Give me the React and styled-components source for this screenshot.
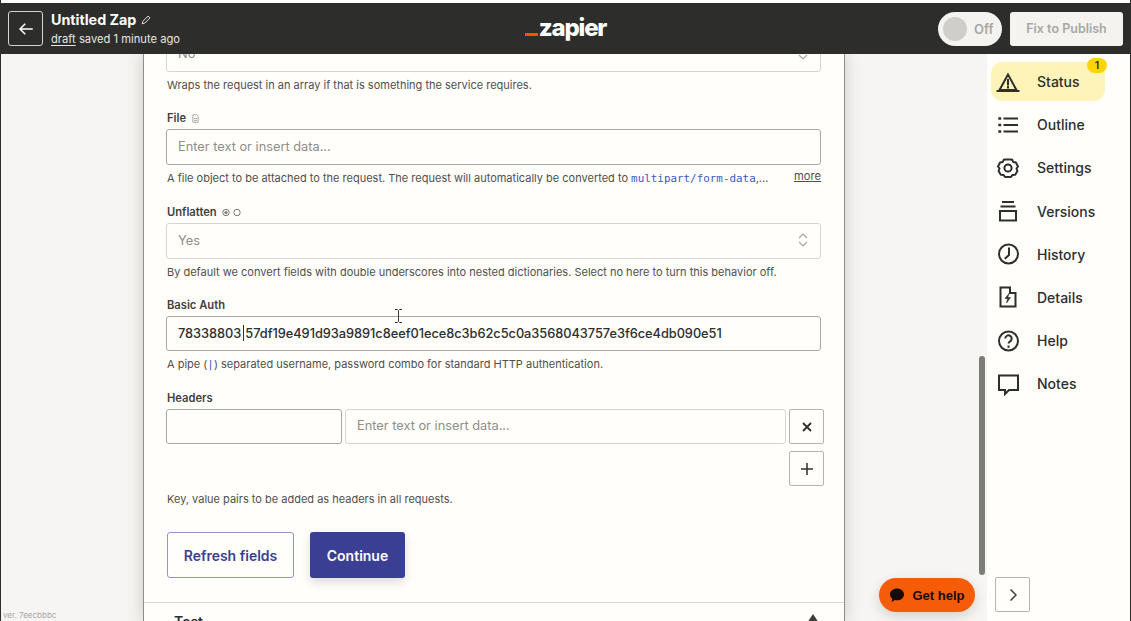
import React from 'react';
import styled, { createGlobalStyle } from 'styled-components';

const GlobalStyle = createGlobalStyle`
    html, body {
        margin: 0;
        height: 100%;
        overflow: hidden;
        background: #fffefb;
        font-family: Inter, "Liberation Sans", sans-serif;
        color: #2d2e2e;
    }
    * {
        box-sizing: border-box;
    }
`;

const Page = styled.div`
    width: 1131px;
    height: 621px;
    padding-top: 3px;
    background: #fffefb;
    display: flex;
    flex-direction: column;
    border-left: 1px solid #2d2d2b;
    border-right: 1px solid #2d2d2b;
    position: relative;
    overflow: hidden;
`;

const Header = styled.header`
    height: 51px;
    flex: none;
    margin: 0 -1px;
    background: #2d2d2b;
    display: grid;
    grid-template-columns: 1fr auto 1fr;
    align-items: center;
    padding: 0 8px;
`;

const HeaderLeft = styled.div`
    display: flex;
    align-items: center;
    gap: 8px;
`;

const BackButton = styled.button`
    width: 35px;
    height: 35px;
    background: transparent;
    border: 1px solid #d6d5d0;
    border-radius: 3px;
    color: #fff;
    padding: 0;
    display: flex;
    align-items: center;
    justify-content: center;
`;

const ZapInfo = styled.div`
    display: flex;
    flex-direction: column;
    gap: 3px;
`;

const ZapTitle = styled.div`
    display: flex;
    align-items: center;
    gap: 5px;
    font-size: 14.3px;
    line-height: 18px;
    font-weight: 700;
    color: #fffefb;
`;

const SavedLine = styled.div`
    font-size: 11.2px;
    line-height: 14px;
    color: #e6e5e0;

    u {
        text-underline-offset: 2px;
    }
`;

const Logo = styled.div`
    display: flex;
    align-items: flex-end;
    gap: 1px;
    margin-top: -1px;
`;

const LogoBar = styled.span`
    width: 13px;
    height: 3px;
    background: #ff4f00;
    margin-bottom: 6px;
`;

const LogoText = styled.span`
    font-size: 24px;
    line-height: 28px;
    font-weight: 800;
    letter-spacing: -1.2px;
    color: #fffefb;
`;

const HeaderRight = styled.div`
    display: flex;
    align-items: center;
    justify-content: flex-end;
    gap: 8px;
`;

const Toggle = styled.div`
    width: 64px;
    height: 34px;
    border-radius: 17px;
    background: #f4f3f0;
    display: flex;
    align-items: center;
    padding: 0 5px;
    gap: 7px;
    font-size: 13px;
    font-weight: 600;
    color: #a8a7a3;
`;

const ToggleKnob = styled.span`
    width: 24px;
    height: 24px;
    border-radius: 50%;
    background: #cfcecb;
`;

const PublishButton = styled.button`
    width: 113px;
    height: 34px;
    background: #f4f3f0;
    border: 0;
    border-radius: 3px;
    font: 600 12.5px Inter, sans-serif;
    color: #a8a7a3;
`;

const Body = styled.div`
    flex: 1;
    min-height: 0;
    display: flex;
    position: relative;
`;

const Canvas = styled.main`
    width: 986px;
    background: #f6f5f3;
    overflow: hidden;
    padding-left: 142px;
    position: relative;
`;

const Panel = styled.section`
    width: 702px;
    height: 100%;
    background: #fffefb;
    border-left: 1px solid #8e8d88;
    border-right: 1px solid #8e8d88;
    box-shadow: 0 0 16px rgba(60, 55, 40, 0.22);
    position: relative;
    overflow: hidden;
`;

const Form = styled.div`
    padding: 0 23px 0 22px;
    display: flex;
    flex-direction: column;
`;

const Field = styled.div`
    margin-top: ${p => p.$gap || 0}px;
`;

const Label = styled.div`
    display: flex;
    align-items: center;
    gap: 5px;
    height: 16px;
    margin-bottom: 3px;
    padding-left: 1px;
    font-size: 11.2px;
    font-weight: 600;
    color: #403f3e;
`;

const InputBox = styled.div`
    height: ${p => p.$height || 36}px;
    flex: ${p => p.$flex || 'none'};
    background: #fffefb;
    border: 1px solid ${p => (p.$muted ? '#d6d5d0' : '#aaa89f')};
    border-radius: 3px;
    display: flex;
    align-items: center;
    justify-content: space-between;
    padding: 0 11px 2px;
    font-size: 12.8px;
    font-weight: ${p => (p.$value ? 500 : 400)};
    color: ${p => (p.$value ? '#2d2e2e' : '#8f8e8a')};
`;

const ClippedSelect = styled(InputBox)`
    margin-top: -18px;
`;

const Caret = styled.span`
    display: inline-block;
    width: 1px;
    height: 16px;
    margin: 0 1px 0 2px;
    background: #2d2e2e;
    vertical-align: -3px;
`;

const AuthValue = styled.span`
    letter-spacing: -0.04px;
`;

const Help = styled.div`
    margin-top: 6px;
    display: flex;
    justify-content: space-between;
    font-size: 11px;
    line-height: 14px;
    padding-left: 1px;
    color: #504f4c;
`;

const Code = styled.code`
    font-family: "DejaVu Sans Mono", monospace;
    font-size: 10.9px;
    color: #3d57c8;
`;

const More = styled.u`
    font-size: 11.2px;
    margin-top: -2px;
`;

const HeaderRow = styled.div`
    display: flex;
    gap: 3px;
    margin-right: -3px;
`;

const SquareButton = styled.button`
    width: 35px;
    height: 35px;
    flex: none;
    background: #fffefb;
    border: 1px solid #b5b4ad;
    border-radius: 2px;
    color: #2d2e2e;
    padding: 0;
    display: flex;
    align-items: center;
    justify-content: center;
`;

const AddButton = styled(SquareButton)`
    align-self: flex-end;
    margin: 7px -3px 0 0;
`;

const Actions = styled.div`
    display: flex;
    gap: 16px;
    margin-top: 26px;
    padding-left: 1px;
`;

const OutlineButton = styled.button`
    width: 127px;
    height: 46px;
    background: #fffefb;
    border: 1px solid #8f95cf;
    border-radius: 3px;
    font: 600 14px Inter, sans-serif;
    color: #3b3f94;
`;

const PrimaryButton = styled.button`
    width: 95px;
    height: 46px;
    background: #3b3f94;
    border: 0;
    border-radius: 3px;
    font: 600 14px Inter, sans-serif;
    color: #fffefb;
    box-shadow: 0 4px 10px rgba(40, 40, 40, 0.16);
`;

const NextStep = styled.div`
    margin-top: 24px;
    border-top: 1px solid #d6d5d0;
    padding: 10px 25px 0 30px;
    display: flex;
    justify-content: space-between;
    font-size: 14px;
    font-weight: 600;
`;

const CollapseArrow = styled.span`
    width: 0;
    height: 0;
    border-left: 6px solid transparent;
    border-right: 6px solid transparent;
    border-bottom: 9px solid #3d3d3b;
    margin: 1px 0 0 0;
`;

const Scrollbar = styled.div`
    position: absolute;
    top: 302px;
    left: 978px;
    width: 6px;
    height: 219px;
    border-radius: 3px;
    background: #7c7c78;
`;

const Version = styled.span`
    position: absolute;
    left: 2px;
    bottom: 1px;
    font-size: 8px;
    color: #a8a7a3;
`;

const TextCursor = styled.svg`
    position: absolute;
    left: 393px;
    top: 255px;
`;

const HelpButton = styled.button`
    position: absolute;
    left: 878px;
    top: 524px;
    width: 96px;
    height: 34px;
    border: 0;
    border-radius: 17px;
    background: #f55c0a;
    display: flex;
    align-items: center;
    justify-content: center;
    gap: 7px;
    font: 700 13px "Liberation Sans", sans-serif;
    color: #140c05;
    box-shadow: 0 4px 12px rgba(60, 50, 30, 0.18);
`;

const Sidebar = styled.aside`
    flex: 1;
    padding: 8px 4px 9px;
    display: flex;
    flex-direction: column;
    gap: 4.2px;
    background: #fffefb;
`;

const NavItem = styled.div`
    position: relative;
    width: 114px;
    height: 39px;
    flex: none;
    display: flex;
    align-items: center;
    gap: 17px;
    padding-left: 5px;
    border-radius: 12px;
    background: ${p => (p.$active ? '#fff4b8' : 'transparent')};
    font-size: 14px;
    font-weight: 500;
    color: #2d2e2e;
`;

const Badge = styled.span`
    position: absolute;
    right: -2px;
    top: -4px;
    width: 20px;
    height: 15px;
    border-radius: 8px;
    background: #ffd400;
    font-size: 10.5px;
    font-weight: 600;
    display: flex;
    align-items: center;
    justify-content: center;
`;

const ExpandButton = styled(SquareButton)`
    margin: auto 0 0 4px;
    color: #403f3e;
`;

const Icon = ({ children, size = 24, sw = 2 }) => (
    <svg width={size} height={size} viewBox="0 0 24 24" fill="none" stroke="currentColor" strokeWidth={sw} strokeLinecap="square">
        {children}
    </svg>
);

const UpDown = () => (
    <svg width="12" height="16" viewBox="0 0 12 16" fill="none" stroke="#aaa89f" strokeWidth="1.2">
        <path d="M2 6l4-4 4 4M2 10l4 4 4-4" />
    </svg>
);

const navItems = [
    { label: 'Status', active: true, icon: <><path d="M12 4.5 L3.5 20 H20.5 Z" strokeLinejoin="miter" /><path d="M1.5 21h21" /><path d="M12 10v4.500M12 17v.5" /></> },
    { label: 'Outline', icon: <><path d="M8.5 5.5H21M8.5 12H21M8.5 18.5H21" /><path d="M3.5 5.5h.5M3.5 12h.5M3.500 18.5h.5" strokeWidth="2.4" /></> },
    { label: 'Settings', icon: <><path d="M8 3.500h8l1.200 2.400 2.700.6 2.100 4-1.500 2 .9 2.500-2.200 3.700-2.700.2L15 21h-6l-1.500-2.100-2.700-.2-2.200-3.700.9-2.500L2 10.500l2.100-4 2.700-.6z" strokeLinejoin="round" /><circle cx="12" cy="12" r="3.600" /></> },
    { label: 'Versions', icon: <><path d="M7 3h10M5.500 7.500h13" /><rect x="4" y="12" width="16" height="9.500" /></> },
    { label: 'History', icon: <><circle cx="12.500" cy="12" r="9.500" /><path d="M13 6.500V13L9.500 16" /></> },
    { label: 'Details', icon: <><path d="M14 2.500H4.500v19h15V8M14 2.500V8h5.500" /><path d="M13 8.500l-4 5h2.600L10.500 18l4-5.500h-2.600z" fill="currentColor" strokeWidth="0.6" /></> },
    { label: 'Help', icon: <><circle cx="12.500" cy="12" r="9.500" /><path d="M9.300 9.500a3.200 3.200 0 1 1 4.800 2.800c-1 .6-1.600 1.100-1.600 2.200" strokeLinecap="butt" /><path d="M12.500 17.500v.3" /></> },
    { label: 'Notes', icon: <><path d="M3 3.500h19V18h-9l-4 4v-4H3z" /></> },
];

export default function App() {
    return (
        <Page>
            <GlobalStyle />
            <Header>
                <HeaderLeft>
                    <BackButton>
                        <svg width="18" height="18" viewBox="0 0 24 24" fill="none" stroke="currentColor" strokeWidth="2">
                            <path d="M21 12H4M11 5l-7 7 7 7" />
                        </svg>
                    </BackButton>
                    <ZapInfo>
                        <ZapTitle>
                            Untitled Zap
                            <svg width="10" height="10" viewBox="0 0 24 24" fill="none" stroke="#e6e5e0" strokeWidth="2.4">
                                <path d="M3 21l1.500-6L17 2.500 21.500 7 9 19.500z" />
                            </svg>
                        </ZapTitle>
                        <SavedLine><u>draft</u> saved 1 minute ago</SavedLine>
                    </ZapInfo>
                </HeaderLeft>
                <Logo>
                    <LogoBar />
                    <LogoText>zapier</LogoText>
                </Logo>
                <HeaderRight>
                    <Toggle>
                        <ToggleKnob />
                        Off
                    </Toggle>
                    <PublishButton>Fix to Publish</PublishButton>
                </HeaderRight>
            </Header>
            <Body>
                <Canvas>
                    <Panel>
                        <Form>
                            <ClippedSelect $muted>
                                No
                                <UpDown />
                            </ClippedSelect>
                            <Help>Wraps the request in an array if that is something the service requires.</Help>

                            <Field $gap={18}>
                                <Label>
                                    File
                                    <svg width="9" height="9" viewBox="0 0 12 12" fill="none" stroke="#8f8e8a" strokeWidth="1">
                                        <path d="M2.500 1h5l2 2v8h-7zM4 6h4M4 8.500h4" />
                                    </svg>
                                </Label>
                                <InputBox>Enter text or insert data...</InputBox>
                                <Help>
                                    <span>A file object to be attached to the request. The request will automatically be converted to <Code>multipart/form-data</Code>,...</span>
                                    <More>more</More>
                                </Help>
                            </Field>

                            <Field $gap={18}>
                                <Label>
                                    Unflatten
                                    <svg width="20" height="9" viewBox="0 0 20 9" fill="none" stroke="#777">
                                        <circle cx="4" cy="4.500" r="3.200" />
                                        <circle cx="4" cy="4.500" r="1.600" fill="#777" stroke="none" />
                                        <circle cx="15" cy="4.500" r="3.200" />
                                    </svg>
                                </Label>
                                <InputBox $muted>
                                    Yes
                                    <UpDown />
                                </InputBox>
                                <Help>By default we convert fields with double underscores into nested dictionaries. Select no here to turn this behavior off.</Help>
                            </Field>

                            <Field $gap={18}>
                                <Label>Basic Auth</Label>
                                <InputBox $value $height={35}>
                                    <AuthValue>78338803<Caret />57df19e491d93a9891c8eef01ece8c3b62c5c0a3568043757e3f6ce4db090e51</AuthValue>
                                </InputBox>
                                <Help>
                                    <span>A pipe (<Code>|</Code>) separated username, password combo for standard HTTP authentication.</span>
                                </Help>
                            </Field>

                            <Field $gap={18}>
                                <Label>Headers</Label>
                                <HeaderRow>
                                    <InputBox $height={35} $flex="0 0 176px" />
                                    <InputBox $muted $height={35} $flex="1">Enter text or insert data...</InputBox>
                                    <SquareButton>
                                        <svg width="14" height="14" viewBox="0 0 14 14" stroke="currentColor" strokeWidth="1.800">
                                            <path d="M3 3l8 8M11 3l-8 8" />
                                        </svg>
                                    </SquareButton>
                                </HeaderRow>
                            </Field>
                            <AddButton>
                                <svg width="14" height="14" viewBox="0 0 14 14" stroke="currentColor" strokeWidth="1.500">
                                    <path d="M7 1v12M1 7h12" />
                                </svg>
                            </AddButton>
                            <Help>Key, value pairs to be added as headers in all requests.</Help>
                            <Actions>
                                <OutlineButton>Refresh fields</OutlineButton>
                                <PrimaryButton>Continue</PrimaryButton>
                            </Actions>
                        </Form>
                        <NextStep>
                            Test
                            <CollapseArrow />
                        </NextStep>
                    </Panel>
                    <Version>ver. 7eecbbbc</Version>
                </Canvas>
                <Sidebar>
                    {navItems.map(item => (
                        <NavItem key={item.label} $active={item.active}>
                            <Icon>{item.icon}</Icon>
                            {item.label}
                            {item.active && <Badge>1</Badge>}
                        </NavItem>
                    ))}
                    <ExpandButton>
                        <svg width="16" height="16" viewBox="0 0 16 16" fill="none" stroke="currentColor" strokeWidth="1.500">
                            <path d="M5.500 2.500L11 8l-5.500 5.500" />
                        </svg>
                    </ExpandButton>
                </Sidebar>
                <Scrollbar />
                <HelpButton>
                    <svg width="16" height="16" viewBox="0 0 16 16" fill="#140c05">
                        <path d="M8 1.500c3.900 0 7 2.600 7 5.900s-3.100 5.900-7 5.900c-.7 0-1.300-.1-1.900-.2L2.500 15l.8-3.300C1.900 10.600 1 9.100 1 7.400 1 4.100 4.100 1.500 8 1.500z" />
                    </svg>
                    Get help
                </HelpButton>
                <TextCursor width="9" height="14" viewBox="0 0 9 14" fill="none" stroke="#3a3a3a" strokeWidth="1">
                    <path d="M1 .500h2.500l1 1 1-1H8M4.500 1.500v11M1 13.500h2.500l1-1 1 1H8" />
                </TextCursor>
            </Body>
        </Page>
    );
}
